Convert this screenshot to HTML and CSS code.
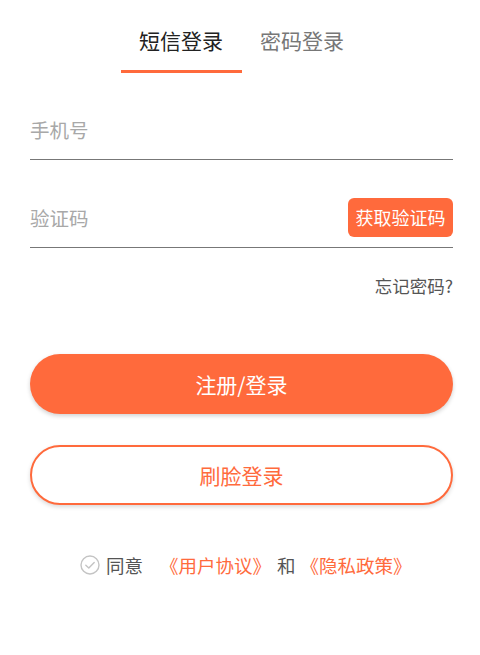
FILE: index.html
```html
<!DOCTYPE html>
<html lang="zh-CN">
<head>
<meta charset="utf-8">
<link rel="stylesheet" href="styles.css">
</head>
<body>
<div class="page">
  <div class="tabs">
    <div class="tab active">短信登录</div>
    <div class="tab">密码登录</div>
  </div>
  <div class="field first">
    <span class="placeholder">手机号</span>
  </div>
  <div class="field second">
    <span class="placeholder">验证码</span>
    <button class="code-btn">获取验证码</button>
  </div>
  <div class="forgot">忘记密码?</div>
  <button class="btn primary">注册/登录</button>
  <button class="btn outline">刷脸登录</button>
  <div class="agree">
    <svg class="check" width="20" height="20" viewBox="0 0 20 20">
      <circle cx="10" cy="10" r="9" fill="none" stroke="#c4c4c4" stroke-width="1.4"/>
      <path d="M5.8 10.2 L8.8 13 L14.2 7.4" fill="none" stroke="#c4c4c4" stroke-width="1.4" stroke-linecap="round" stroke-linejoin="round"/>
    </svg>
    <span class="agree-text">同意</span>
    <span class="link first-link">《用户协议》</span>
    <span class="and">和</span>
    <span class="link">《隐私政策》</span>
  </div>
</div>
</body>
</html>
```
FILE: styles.css
```css
* { box-sizing: border-box; }
html, body {
  margin: 0;
  padding: 0;
  background: #fff;
}
body {
  font-family: "Noto Sans CJK SC", "Noto Sans", sans-serif;
  width: 480px;
  height: 655px;
  overflow: hidden;
}
.page {
  display: flex;
  flex-direction: column;
  padding: 0 27px 0 30px;
}
.tabs {
  display: flex;
  justify-content: center;
}
.tab {
  width: 121px;
  text-align: center;
  font-size: 21px;
  line-height: 28px;
  padding-top: 26px;
  padding-bottom: 16px;
  border-bottom: 3px solid transparent;
  color: #777;
}
.tab.active {
  color: #222;
  border-bottom-color: #ff6a3c;
}
.field {
  height: 60px;
  display: flex;
  align-items: center;
  justify-content: space-between;
  border-bottom: 1px solid #777;
}
.field.first { margin-top: 27px; }
.field.second { margin-top: 28px; }
.placeholder {
  font-size: 19.5px;
  color: #a8a8a8;
  line-height: 24px;
  padding-top: 1px;
}
.code-btn {
  font-family: inherit;
  background: #ff6a3c;
  color: #fff;
  border: none;
  border-radius: 6px;
  font-size: 18px;
  line-height: 24px;
  width: 105px;
  height: 39px;
  padding: 0;
  margin-top: -1px;
}
.forgot {
  margin-top: 26px;
  text-align: right;
  font-size: 17.5px;
  line-height: 24px;
  color: #555;
}
.btn {
  font-family: inherit;
  width: 100%;
  height: 60px;
  border-radius: 30px;
  font-size: 21px;
  padding: 0;
}
.btn.primary {
  margin-top: 56px;
  background: #ff6a3c;
  border: none;
  color: #fff;
  box-shadow: 0 2px 4px rgba(0,0,0,0.18);
}
.btn.outline {
  margin-top: 31px;
  background: #fff;
  border: 2px solid #ff6a3c;
  color: #ff6a3c;
  box-shadow: 0 2px 4px rgba(0,0,0,0.15);
}
.agree {
  margin-top: 48px;
  display: flex;
  align-items: center;
  font-size: 18.5px;
  line-height: 24px;
  color: #555;
  padding-left: 50px;
}
.check { margin-right: 6px; flex: none; }
.link { color: #ff6a3c; }
.first-link { margin-left: 17px; }
.and { margin: 0 5px 0 6px; }
```
